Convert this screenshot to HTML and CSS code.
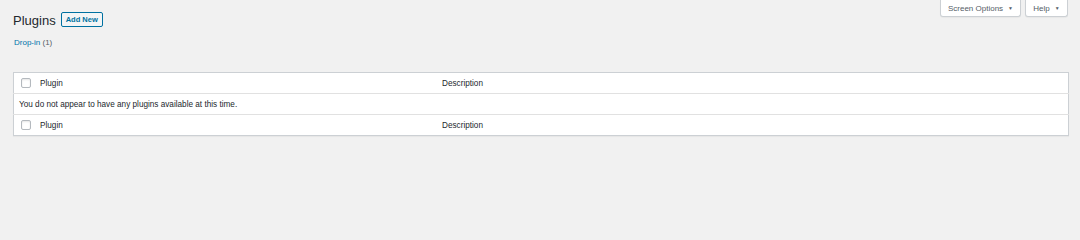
FILE: index.html
```html
<!DOCTYPE html>
<html>
<head>
<meta charset="utf-8">
<link rel="stylesheet" href="styles.css">
</head>
<body>
<div class="screen-meta-links">
  <button class="meta-btn so">Screen Options <span class="caret">▼</span></button>
  <button class="meta-btn help">Help <span class="caret">▼</span></button>
</div>
<div class="wrap">
  <div class="title-row">
    <h1 class="page-title">Plugins</h1>
    <a class="add-new">Add New</a>
  </div>
  <ul class="subsubsub">
    <li><a class="current">Drop-in</a> <span class="count">(1)</span></li>
  </ul>
  <table class="plugins">
    <thead>
      <tr>
        <td class="check"><span class="cb"></span></td>
        <th class="col-name">Plugin</th>
        <th class="col-desc">Description</th>
      </tr>
    </thead>
    <tbody>
      <tr>
        <td colspan="3" class="empty">You do not appear to have any plugins available at this time.</td>
      </tr>
    </tbody>
    <tfoot>
      <tr>
        <td class="check"><span class="cb"></span></td>
        <th class="col-name">Plugin</th>
        <th class="col-desc">Description</th>
      </tr>
    </tfoot>
  </table>
</div>
</body>
</html>
```
FILE: styles.css
```css
html, body {
  margin: 0;
  padding: 0;
  background: #f1f1f1;
  font-family: "Liberation Sans", Arial, sans-serif;
  color: #23282d;
  width: 1080px;
  height: 212px;
  overflow: hidden;
}
.screen-meta-links {
  position: absolute;
  top: 0;
  right: 12px;
  display: flex;
  gap: 4px;
}
.meta-btn {
  height: 17px;
  background: #fff;
  border: 1px solid #ccd0d4;
  border-top: none;
  border-radius: 0 0 3px 3px;
  box-shadow: 0 1px 1px rgba(0,0,0,0.04);
  font-family: "Liberation Sans", Arial, sans-serif;
  font-size: 8px;
  color: #555d66;
  padding: 0;
  display: flex;
  align-items: center;
  justify-content: center;
  gap: 5px;
  white-space: nowrap;
}
.so { width: 81px; }
.help { width: 43px; }
.caret { font-size: 5px; color: #555d66; }
.wrap {
  padding: 12px 12px 0 13px;
}
.title-row {
  display: flex;
  align-items: center;
  gap: 5px;
  height: 15px;
}
.page-title {
  margin: 0;
  font-size: 13px;
  font-weight: 400;
  color: #23282d;
  line-height: 15px;
  position: relative;
  top: 1px;
}
.add-new {
  display: inline-block;
  border: 1px solid #0071a1;
  border-radius: 2px;
  background: #f3f5f6;
  color: #0071a1;
  font-size: 7.5px;
  font-weight: 700;
  line-height: 13px;
  padding: 0 4px;
  height: 13px;
}
.subsubsub {
  list-style: none;
  margin: 10px 0 0 1px;
  padding: 0;
  font-size: 8px;
  color: #555d66;
  line-height: 11px;
}
.subsubsub a { color: #0073aa; font-weight: 400; }
.plugins {
  margin-top: 24px;
  width: 1056px;
  border: 1px solid #ccd0d4;
  border-collapse: collapse;
  background: #fff;
  box-shadow: 0 1px 1px rgba(0,0,0,0.04);
  font-size: 8.2px;
}
.plugins td, .plugins th {
  height: 20px;
  padding: 0;
  text-align: left;
  font-weight: 400;
  vertical-align: middle;
  color: #23282d;
}
.plugins thead tr { border-bottom: 1px solid #e1e1e1; }
.plugins tfoot tr { border-top: 1px solid #e1e1e1; }
.check { width: 19px; padding-left: 7px !important; }
.cb {
  display: block;
  width: 8px;
  height: 8px;
  border: 1px solid #b4b9be;
  border-radius: 2px;
  background: #fff;
  box-shadow: inset 0 1px 2px rgba(0,0,0,0.1);
}
.col-name { width: 402px; }
.empty { padding-left: 5px !important; }
```
